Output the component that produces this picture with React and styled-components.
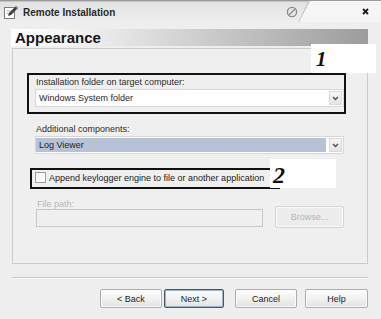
import React from 'react';
import styled, { createGlobalStyle } from 'styled-components';

const Global = createGlobalStyle`
  html, body { margin: 0; padding: 0; background: #eeeeee; }
  body { font-family: "Liberation Sans", Arial, sans-serif; }
  #root { width: 381px; height: 319px; }
`;

const Window = styled.div`
  position: relative;
  width: 381px;
  height: 319px;
  background: #eeeeee;
  display: flex;
  flex-direction: column;
  overflow: hidden;
  box-sizing: border-box;
`;

const TitleBar = styled.div`
  height: 22px;
  display: flex;
  align-items: stretch;
  background: #f5f5f5;
  border-top: 1px solid #9a9a9a;
  box-sizing: border-box;
`;

const TabEdge = styled.div`
  width: 310px;
  background: #c4c4c4;
  clip-path: polygon(0 0, 310px 0, 299px 100%, 0 100%);
  display: flex;
  padding-top: 1px;
  box-sizing: border-box;
`;

const Tab = styled.div`
  flex: 1;
  background: linear-gradient(to bottom, #e2e2e2, #eeeeee);
  clip-path: polygon(0 0, 308px 0, 298px 100%, 0 100%);
  display: flex;
  align-items: center;
  padding-left: 3px;
  gap: 4px;
`;

const TitleText = styled.span`
  font: bold 10px "Liberation Sans", Arial, sans-serif;
  color: #2a2a2a;
  flex: 1;
`;

const PinIcon = styled.svg`
  margin-right: 12px;
`;

const CloseBox = styled.div`
  flex: 1;
  display: flex;
  align-items: center;
  justify-content: flex-end;
  padding-right: 12px;
`;

const Main = styled.div`
  flex: 1;
  display: flex;
  flex-direction: column;
  padding: 7px 13px 0 11px;
`;

const Header = styled.div`
  height: 17px;
  background: linear-gradient(to right, #ffffff 0%, #f6f6f6 14%, #9c9c9c 100%);
  font: bold 15px "Liberation Sans", Arial, sans-serif;
  color: #161616;
  padding-left: 4px;
  display: flex;
  align-items: center;
`;

const Group = styled.div`
  margin: 2px 0 0 1px;
  height: 216px;
  border: 1px solid #cbcbcb;
  background: #efefef;
  box-sizing: border-box;
  padding: 28px 23px 0 22px;
  display: flex;
  flex-direction: column;
`;

const Field = styled.div`
  position: relative;
  display: flex;
  flex-direction: column;
  margin-top: ${p => p.$top || 0}px;
`;

const Label = styled.div`
  font-size: 9px;
  line-height: ${p => (p.$tight ? 10 : 11)}px;
  color: ${p => (p.$disabled ? '#b8b8b8' : '#2b2b2b')};
  margin-bottom: ${p => (p.$tight ? 0 : 1)}px;
  padding-left: 1px;
`;

const Select = styled.div`
  height: 18px;
  display: flex;
  align-items: stretch;
  border: 1px solid #d6d6d6;
  background: #ffffff;
  box-sizing: border-box;
`;

const SelectValue = styled.div`
  flex: 1;
  font-size: 9px;
  color: #1e1e1e;
  display: flex;
  align-items: center;
  padding-left: 3px;
  margin: 1px 2px 1px 0;
  background: ${p => (p.$selected ? '#b7c2d6' : 'transparent')};
`;

const ArrowButton = styled.div`
  width: 13px;
  margin: 1px;
  border: 1px solid #d8d8d8;
  background: linear-gradient(to bottom, #f6f6f6, #e4e4e4);
  display: flex;
  align-items: center;
  justify-content: center;
  box-sizing: border-box;
`;

const CheckRow = styled.div`
  position: relative;
  height: 13px;
  display: flex;
  align-items: center;
  gap: 3px;
  margin-top: 17px;
  font-size: 9px;
  color: #222;
`;

const CheckBox = styled.span`
  width: 11px;
  height: 11px;
  box-sizing: border-box;
  border: 1px solid #9c9c9c;
  background: linear-gradient(to bottom right, #f0f0f0, #ffffff);
  margin-left: 0;
`;

const Callout = styled.div`
  position: absolute;
  border: 2px solid #111;
  pointer-events: none;
  top: ${p => p.$t}px;
  left: ${p => p.$l}px;
  right: ${p => p.$r}px;
  bottom: ${p => p.$b}px;
`;

const FileRow = styled.div`
  display: flex;
  align-items: flex-end;
  margin-top: 15px;
`;

const FileCol = styled.div`
  width: 228px;
  display: flex;
  flex-direction: column;
  padding-left: 1px;
  box-sizing: border-box;
`;

const FileInput = styled.div`
  height: 18px;
  border: 1px solid #c6c6c6;
  background: #efefef;
  box-sizing: border-box;
`;

const Button = styled.div`
  width: ${p => p.$w}px;
  height: ${p => p.$h || 19}px;
  margin-left: ${p => p.$ml || 0}px;
  margin-bottom: ${p => p.$mb || 0}px;
  box-sizing: border-box;
  border: 1px solid ${p => (p.$default ? '#4a5766' : p.$disabled ? '#d4d4d4' : '#adadad')};
  box-shadow: ${p => (p.$default ? 'inset 0 0 0 1px #9fb3c8' : 'inset 0 0 0 1px #fbfbfb')};
  border-radius: 2px;
  background: ${p => (p.$disabled ? '#ececec' : 'linear-gradient(to bottom, #fdfdfd 0%, #f1f1f1 50%, #e2e2e2 100%)')};
  display: flex;
  align-items: center;
  justify-content: center;
  font-size: 9px;
  color: ${p => (p.$disabled ? '#b4b4b4' : '#1c1c1c')};
`;

const Separator = styled.div`
  margin: 13px 0 0 1px;
  height: 1px;
  background: #c8c8c8;
  border-bottom: 1px solid #fafafa;
`;

const ButtonRow = styled.div`
  display: flex;
  justify-content: flex-end;
  margin-top: 10px;
`;

const Badge = styled.div`
  position: absolute;
  left: ${p => p.$x}px;
  top: ${p => p.$y}px;
  width: ${p => p.$w}px;
  height: ${p => p.$h}px;
  background: #ffffff;
  font: italic bold ${p => p.$fs}px "Liberation Serif", "Times New Roman", serif;
  color: #111;
  line-height: 1;
  padding: ${p => p.$pad};
  box-sizing: border-box;
`;

const Chevron = () => (
  <svg width="7" height="5" viewBox="0 0 7 5">
    <path d="M1 1 L3.5 3.5 L6 1" fill="none" stroke="#4a4a4a" strokeWidth="1.4" />
  </svg>
);

const EditIcon = () => (
  <svg width="16" height="16" viewBox="0 0 16 16">
    <rect x="1.5" y="3.5" width="10" height="11" fill="#ffffff" stroke="#7a7a7a" />
    <line x1="3.5" y1="7" x2="8" y2="7" stroke="#b0b0b0" />
    <line x1="3.5" y1="9.5" x2="7" y2="9.5" stroke="#b0b0b0" />
    <path d="M5 12 L6 9 L13 2 L15 4 L8 11 Z" fill="#3c3c3c" />
    <path d="M13 2 L15 4 L14 5 L12 3 Z" fill="#8a8a8a" />
  </svg>
);

export default function App() {
  return (
    <>
      <Global />
      <Window>
        <TitleBar>
          <TabEdge>
            <Tab>
              <EditIcon />
              <TitleText>Remote Installation</TitleText>
              <PinIcon width="12" height="12" viewBox="0 0 12 12">
                <circle cx="6" cy="6" r="4.6" fill="none" stroke="#8c8c8c" strokeWidth="1.4" />
                <line x1="3.2" y1="8.8" x2="8.8" y2="3.2" stroke="#8c8c8c" strokeWidth="1.4" />
              </PinIcon>
            </Tab>
          </TabEdge>
          <CloseBox>
            <svg width="7" height="7" viewBox="0 0 7 7">
              <path d="M1 1 L6 6 M6 1 L1 6" stroke="#1a1a1a" strokeWidth="1.8" />
            </svg>
          </CloseBox>
        </TitleBar>
        <Main>
          <Header>Appearance</Header>
          <Group>
            <Field>
              <Label>Installation folder on target computer:</Label>
              <Select>
                <SelectValue>Windows System folder</SelectValue>
                <ArrowButton><Chevron /></ArrowButton>
              </Select>
              <Callout $t={-4} $l={-8} $r={-2} $b={-7} />
            </Field>
            <Field $top={17}>
              <Label>Additional components:</Label>
              <Select>
                <SelectValue $selected>Log Viewer</SelectValue>
                <ArrowButton><Chevron /></ArrowButton>
              </Select>
            </Field>
            <CheckRow>
              <CheckBox />
              <span>Append keylogger engine to file or another application</span>
              <Callout $t={-3} $l={-5} $r={64} $b={-5} />
            </CheckRow>
            <FileRow>
              <FileCol>
                <Label $disabled $tight>File path:</Label>
                <FileInput />
              </FileCol>
              <Button $w={69} $h={22} $ml={11} $mb={-1} $disabled style={{ marginLeft: 'auto' }}>Browse...</Button>
            </FileRow>
          </Group>
          <Separator />
          <ButtonRow>
            <Button $w={62}>&lt; Back</Button>
            <Button $w={60} $ml={2} $default>Next &gt;</Button>
            <Button $w={62} $ml={11}>Cancel</Button>
            <Button $w={63} $ml={8}>Help</Button>
          </ButtonRow>
        </Main>
        <Badge $x={311} $y={44} $w={65} $h={29} $fs={21} $pad="5px 0 0 5px">1</Badge>
        <Badge $x={270} $y={159} $w={66} $h={29} $fs={24} $pad="4px 0 0 3px">2</Badge>
      </Window>
    </>
  );
}
